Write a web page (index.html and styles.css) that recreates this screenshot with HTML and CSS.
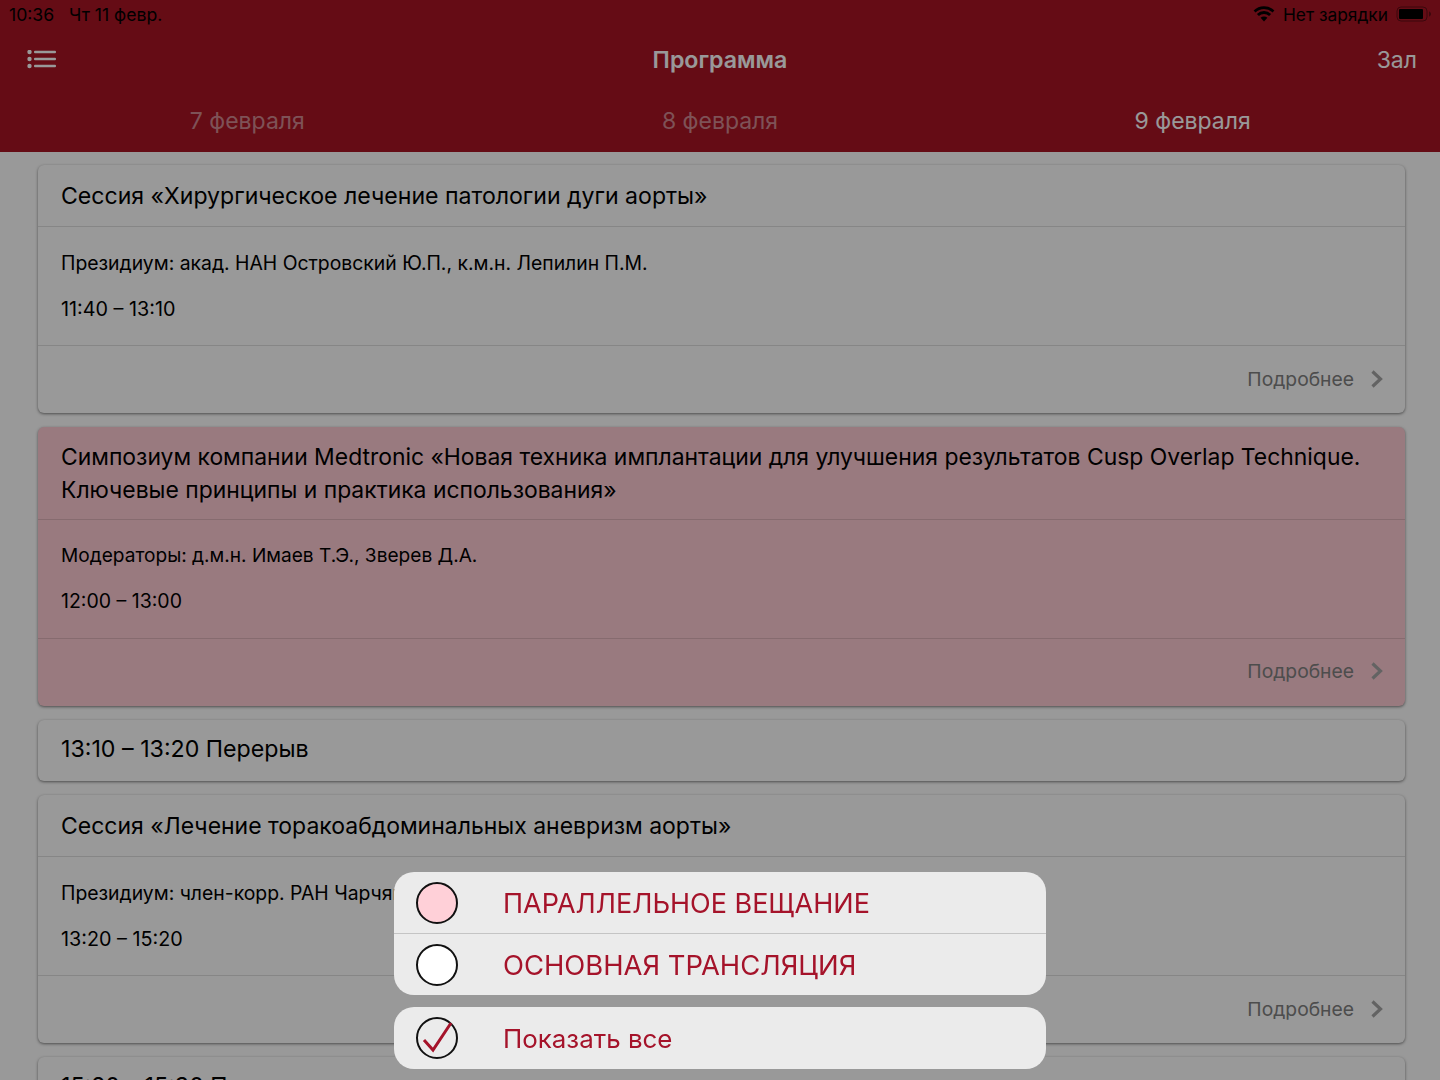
FILE: index.html
```html
<!DOCTYPE html>
<html lang="ru">
<head>
<meta charset="utf-8">
<title>Программа</title>
<link rel="stylesheet" href="styles.css">
</head>
<body>
<div class="page">
  <header class="header">
    <div class="status">
      <span class="time">10:36</span>
      <span class="date">Чт 11 февр.</span>
      <span class="status-right">
        <svg class="wifi" width="22" height="16" viewBox="0 0 22 16"><path d="M11 15.500 7.600 11.800a4.800 4.800 0 0 1 6.800 0z"/><path d="M5.900 10.100 3.900 8a10 10 0 0 1 14.200 0l-2 2.100a7.200 7.200 0 0 0-10.200 0z"/><path d="M2.500 6.500 .6 4.500a14.800 14.800 0 0 1 20.800 0l-1.900 2a12 12 0 0 0-17 0z"/></svg>
        <span class="charge">Нет зарядки</span>
        <svg class="battery" width="36" height="16" viewBox="0 0 36 16"><rect class="bat-shell" x="1" y="1" width="30" height="14" rx="4"/><rect x="3" y="3" width="24" height="10" rx="1"/><path class="bat-tip" d="M33 5.500c1.200.3 2 1.300 2 2.500s-.8 2.200-2 2.500z"/></svg>
      </span>
    </div>
    <div class="nav">
      <svg class="menu" width="30" height="20" viewBox="0 0 30 20"><circle cx="3.500" cy="2" r="2.200"/><circle cx="3.500" cy="9" r="2.200"/><circle cx="3.500" cy="16" r="2.200"/><rect x="8" y="0.700" width="22" height="2.600" rx="1"/><rect x="8" y="7.700" width="22" height="2.600" rx="1"/><rect x="8" y="14.700" width="22" height="2.600" rx="1"/></svg>
      <span class="nav-title">Программа</span>
      <span class="nav-action">Зал</span>
    </div>
    <div class="tabs">
      <span class="tab">7 февраля</span>
      <span class="tab">8 февраля</span>
      <span class="tab tab-active">9 февраля</span>
    </div>
  </header>
  <main class="list">
    <article class="card">
      <h2 class="card-title">Сессия «Хирургическое лечение патологии дуги аорты»</h2>
      <div class="card-body">
        <p class="people">Президиум: акад. НАН Островский Ю.П., к.м.н. Лепилин П.М.</p>
        <p class="hours">11:40 – 13:10</p>
      </div>
      <div class="card-foot"><span>Подробнее</span><svg class="chev" width="12" height="18" viewBox="0 0 12 18"><path d="M1.500 1.500l8 7.500-8 7.500"/></svg></div>
    </article>
    <article class="card card-pink">
      <h2 class="card-title">Симпозиум компании Medtronic «Новая техника имплантации для улучшения результатов Cusp Overlap Technique. Ключевые принципы и практика использования»</h2>
      <div class="card-body">
        <p class="people">Модераторы: д.м.н. Имаев Т.Э., Зверев Д.А.</p>
        <p class="hours">12:00 – 13:00</p>
      </div>
      <div class="card-foot"><span>Подробнее</span><svg class="chev" width="12" height="18" viewBox="0 0 12 18"><path d="M1.500 1.500l8 7.500-8 7.500"/></svg></div>
    </article>
    <article class="card">
      <h2 class="card-title card-title-solo">13:10 – 13:20 Перерыв</h2>
    </article>
    <article class="card">
      <h2 class="card-title card-title-tight">Сессия «Лечение торакоабдоминальных аневризм аорты»</h2>
      <div class="card-body">
        <p class="people">Президиум: член-корр. РАН Чарчян Э.Р.</p>
        <p class="hours">13:20 – 15:20</p>
      </div>
      <div class="card-foot"><span>Подробнее</span><svg class="chev" width="12" height="18" viewBox="0 0 12 18"><path d="M1.500 1.500l8 7.500-8 7.500"/></svg></div>
    </article>
    <article class="card">
      <h2 class="card-title card-title-solo">15:20 – 15:30 Перерыв</h2>
    </article>
  </main>
</div>
<div class="overlay">
  <div class="sheet">
    <div class="sheet-row sheet-row-first"><span class="dot dot-pink"></span><span>ПАРАЛЛЕЛЬНОЕ ВЕЩАНИЕ</span></div>
    <div class="sheet-row sheet-row-line"><span class="dot"></span><span class="label-main">ОСНОВНАЯ ТРАНСЛЯЦИЯ</span></div>
  </div>
  <div class="sheet">
    <div class="sheet-row">
      <span class="dot dot-check"><svg width="42" height="42" viewBox="0 0 42 42"><path d="M8 23l9 10L35 6"/></svg></span>
      <span class="label-all">Показать все</span>
    </div>
  </div>
</div>
</body>
</html>
```
FILE: styles.css
```css
* { box-sizing: border-box; }
html, body { margin: 0; height: 100%; overflow: hidden; }
body { font-family: Inter, Roboto, "Liberation Sans", sans-serif; color: #000; background: #fff; }
.page { height: 1080px; overflow: hidden; display: flex; flex-direction: column; background: #fff; }
.header { height: 152px; flex: none; background: #a81423; }
.status { height: 30px; display: flex; align-items: center; padding: 0 8px 2px 9px; font-size: 17.600px; color: #000; }
.time { margin-right: 15px; }
.status-right { margin-left: auto; display: flex; align-items: center; gap: 8px; font-size: 17.350px; }
.battery .bat-shell { fill: none; stroke: #000; stroke-opacity: .4; stroke-width: 1; }
.battery .bat-tip { opacity: .4; }
.nav { height: 60px; display: flex; align-items: center; justify-content: space-between; padding: 0 23px 0 26px; position: relative; color: #fff; }
.menu { fill: #fff; }
.nav-title { position: absolute; left: 0; right: 0; text-align: center; font-size: 23.200px; font-weight: 600; }
.nav-action { font-size: 23px; }
.tabs { display: grid; grid-template-columns: repeat(3, 1fr); height: 62px; padding: 0 11px; align-items: center; text-align: center; font-size: 23px; color: rgba(255,255,255,.5); }
.tab-active { color: #fff; }
.list { flex: 1; min-height: 0; padding: 13px 35px 0 38px; display: flex; flex-direction: column; gap: 14px; background: #fff; }
.card { flex: none; background: #fff; border-radius: 6px; box-shadow: 0 1px 3px rgba(0,0,0,.5); }
.card-pink { background: #ffccd4; }
.card-title { margin: 0; padding: 15px 23px 13px; font-size: 23.080px; line-height: 33px; font-weight: 400; border-bottom: 1px solid rgba(0,0,0,.12); }
.card-pink .card-title { padding: 14px 23px 13px; font-size: 22.900px; line-height: 32.500px; }
.card-title-tight { font-size: 22.980px; }
.card-title-solo { border-bottom: 0; padding: 13px 23px 15px; font-size: 23.200px; }
.card-body { height: 119px; padding: 24px 23px 0; border-bottom: 1px solid rgba(0,0,0,.12); }
.card-pink .card-body { padding-top: 23px; }
.people, .hours { margin: 0; line-height: 24px; }
.people { font-size: 19.370px; }
.hours { margin-top: 22px; font-size: 19.800px; }
.card-pink .people { font-size: 19.100px; }
.card-pink .hours { font-size: 19.500px; }
.card-foot { height: 67px; display: flex; align-items: center; justify-content: flex-end; gap: 17px; padding: 0 22px 2px 0; font-size: 19.300px; color: #808080; }
.card-pink .card-foot { padding-bottom: 4px; }
.chev { fill: none; stroke: #a6a6a6; stroke-width: 3.200; }
.overlay { position: fixed; inset: 0; background: rgba(0,0,0,.4); display: flex; flex-direction: column; justify-content: flex-end; align-items: center; gap: 12px; padding-bottom: 11px; }
.sheet { width: 652px; background: #ebebeb; border-radius: 20px; overflow: hidden; }
.sheet-row { height: 62px; display: flex; align-items: center; gap: 45px; padding-left: 22px; font-size: 27px; color: #a5132a; }
.sheet-row-first { height: 61px; }
.sheet-row-first span:last-child { position: relative; top: 1px; }
.sheet-row-line { border-top: 1px solid #c4c4c4; }
.label-main { font-size: 27.400px; }
.label-all { font-size: 25.900px; }
.dot { width: 42px; height: 42px; border-radius: 50%; border: 2px solid #111; background: #fff; flex: none; position: relative; }
.dot-pink { background: #ffd0d8; }
.dot-check { background: transparent; }
.dot-check svg { position: absolute; left: -2px; top: -2px; fill: none; stroke: #a5132a; stroke-width: 3; }
```
